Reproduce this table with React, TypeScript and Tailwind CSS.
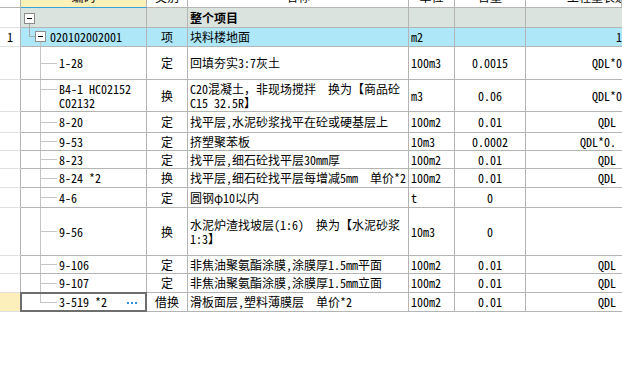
import React from "react";

type Child = {
  h: string;
  code: React.ReactNode;
  t: string;
  name: React.ReactNode;
  unit: string;
  q: string;
  e: string;
  br: string;
  last?: boolean;
};

const children: Child[] = [
  { h: "h-[33px]", code: "1-28", t: "定", name: "回填夯实3:7灰土", unit: "100m3", q: "0.0015", e: "QDL*0", br: "top-[16px]" },
  {
    h: "h-[32px]",
    code: (
      <>
        {"B4-1 HC02152"}
        <br />
        {"C02132"}
      </>
    ),
    t: "换",
    name: (
      <>
        {"C20混凝土，非现场搅拌  换为【商品砼"}
        <br />
        {"C15 32.5R】"}
      </>
    ),
    unit: "m3",
    q: "0.06",
    e: "QDL*0",
    br: "top-[9px]",
  },
  { h: "h-[21px]", code: "8-20", t: "定", name: "找平层,水泥砂浆找平在砼或硬基层上", unit: "100m2", q: "0.01", e: "QDL ", br: "top-[10px]" },
  { h: "h-[18px]", code: "9-53", t: "定", name: "挤塑聚苯板", unit: "10m3", q: "0.0002", e: "QDL*0. ", br: "top-[8px]" },
  { h: "h-[18px]", code: "8-23", t: "定", name: "找平层,细石砼找平层30mm厚", unit: "100m2", q: "0.01", e: "QDL ", br: "top-[8px]" },
  { h: "h-[19px]", code: "8-24 *2", t: "换", name: "找平层,细石砼找平层每增减5mm  单价*2", unit: "100m2", q: "0.01", e: "QDL ", br: "top-[9px]" },
  { h: "h-[20px]", code: "4-6", t: "定", name: "圆钢φ10以内", unit: "t", q: "0", e: "", br: "top-[9px]" },
  {
    h: "h-[48px]",
    code: "9-56",
    t: "换",
    name: (
      <>
        {"水泥炉渣找坡层(1:6)  换为【水泥砂浆"}
        <br />
        {"1:3】"}
      </>
    ),
    unit: "10m3",
    q: "0",
    e: "",
    br: "top-[23px]",
  },
  { h: "h-[18px]", code: "9-106", t: "定", name: "非焦油聚氨酯涂膜,涂膜厚1.5mm平面", unit: "100m2", q: "0.01", e: "QDL ", br: "top-[8px]" },
  { h: "h-[19px]", code: "9-107", t: "定", name: "非焦油聚氨酯涂膜,涂膜厚1.5mm立面", unit: "100m2", q: "0.01", e: "QDL ", br: "top-[9px]" },
  { h: "h-[19px]", code: "3-519 *2", t: "借换", name: "滑板面层,塑料薄膜层  单价*2", unit: "100m2", q: "0.01", e: "QDL ", br: "top-[9px]", last: true },
];

function Box({ className }: { className: string }) {
  return (
    <div
      className={`absolute w-[11px] h-[11px] border border-[#8c8c8c] bg-white flex items-center justify-center ${className}`}
    >
      <div className="w-[5px] h-px bg-black" />
    </div>
  );
}

function Head({ w, extra, children }: { w: string; extra: string; children?: React.ReactNode }) {
  return (
    <div className={`flex items-end overflow-hidden shrink-0 border-r border-b ${w} ${extra}`}>
      <span className="leading-[12px] mb-[4px] whitespace-nowrap">{children}</span>
    </div>
  );
}

export default function App() {
  return (
    <div className="w-[622px] h-[388px] bg-white overflow-hidden text-[12px] leading-[14px] text-black font-['Noto_Sans_Mono_CJK_SC','Noto_Sans_CJK_SC',monospace]">
      {/* header */}
      <div className="flex h-[8px]">
        <div className="w-[21px] shrink-0 border-r border-b border-[#b4b4b4] bg-white" />
        <Head w="w-[126px]" extra="justify-center bg-[#fdf0b9] border-r-[#b4b4b4] border-b-[#3aa0d5]">编码</Head>
        <Head w="w-[41px]" extra="justify-center bg-white border-[#b4b4b4]">类别</Head>
        <Head w="w-[221px]" extra="justify-center bg-white border-[#b4b4b4]">名称</Head>
        <Head w="w-[46px]" extra="justify-center bg-white border-[#b4b4b4]">单位</Head>
        <Head w="w-[71px]" extra="justify-center bg-white border-[#b4b4b4]">含量</Head>
        <Head w="w-[96px]" extra="justify-start pl-[41px] bg-white border-[#b4b4b4]">工程量表达式</Head>
      </div>

      {/* row: 整个项目 */}
      <div className="flex h-[20px]">
        <div className="w-[21px] shrink-0 border-r border-b border-r-[#b4b4b4] border-b-[#e0e0e0] bg-white" />
        <div className="relative w-[126px] shrink-0 border-r border-b border-[#b4b4b4] bg-[#dbe3df]">
          <Box className="left-[3px] top-[5px]" />
          <div className="absolute left-[8px] top-[16px] bottom-0 w-px bg-[#a8a8a8]" />
        </div>
        <div className="w-[41px] shrink-0 border-r border-b border-[#b4b4b4] bg-[#dbe3df]" />
        <div className="w-[221px] shrink-0 flex items-center pl-[2px] font-bold border-r border-b border-[#b4b4b4] bg-[#dbe3df]">
          整个项目
        </div>
        <div className="w-[46px] shrink-0 border-r border-b border-[#b4b4b4] bg-[#dbe3df]" />
        <div className="w-[71px] shrink-0 border-r border-b border-[#b4b4b4] bg-[#dbe3df]" />
        <div className="w-[96px] shrink-0 border-b border-[#b4b4b4] bg-[#dbe3df]" />
      </div>

      {/* row: 020102002001 */}
      <div className="flex h-[19px]">
        <div className="w-[21px] shrink-0 flex items-center justify-center border-r border-b border-r-[#b4b4b4] border-b-[#e0e0e0] bg-white">
          1
        </div>
        <div className="relative w-[126px] shrink-0 flex items-center pl-[29px] border-r border-b border-[#b4b4b4] bg-[#aee7f8]">
          <div className="absolute left-[8px] top-0 h-[9px] w-px bg-[#a8a8a8]" />
          <div className="absolute left-[8px] top-[8px] w-[6px] h-px bg-[#a8a8a8]" />
          <Box className="left-[14px] top-[3px]" />
          <div className="absolute left-[19px] top-[14px] bottom-0 w-px bg-[#c4c4c4]" />
          020102002001
        </div>
        <div className="w-[41px] shrink-0 flex items-center justify-center border-r border-b border-[#b4b4b4] bg-[#aee7f8]">
          项
        </div>
        <div className="w-[221px] shrink-0 flex items-center pl-[2px] border-r border-b border-[#b4b4b4] bg-[#aee7f8]">
          块料楼地面
        </div>
        <div className="w-[46px] shrink-0 flex items-center pl-[2px] border-r border-b border-[#b4b4b4] bg-[#aee7f8]">
          m2
        </div>
        <div className="w-[71px] shrink-0 border-r border-b border-[#b4b4b4] bg-[#aee7f8]" />
        <div className="w-[96px] shrink-0 flex items-center justify-end border-b border-[#b4b4b4] bg-[#aee7f8]">
          1
        </div>
      </div>

      {children.map((c, i) => (
        <div key={i} className={`flex ${c.h}`}>
          {c.last ? (
            <div className="w-[21px] shrink-0 border-r border-b border-r-[#2f9ad6] border-b-[#e0e0e0] bg-[#fdefbb]" />
          ) : (
            <div className="w-[21px] shrink-0 border-r border-b border-r-[#b4b4b4] border-b-[#e0e0e0] bg-white" />
          )}
          <div className="relative w-[126px] shrink-0 flex items-center pl-[38px] whitespace-pre border-r border-b border-[#b4b4b4] bg-white">
            {c.last ? (
              <div className="absolute left-[19px] top-0 h-[10px] w-px bg-[#c4c4c4]" />
            ) : (
              <div className="absolute left-[19px] top-0 bottom-0 w-px bg-[#c4c4c4]" />
            )}
            <div className={`absolute left-[19px] w-[17px] h-px bg-[#c4c4c4] ${c.br}`} />
            <div>{c.code}</div>
            {c.last && (
              <>
                <div className="absolute -left-px -top-px -right-px -bottom-px border-2 border-[#6e6e6e]" />
                <div className="absolute left-[106px] top-[9px] flex gap-[2px]">
                  <div className="w-[2px] h-[2px] bg-[#2f8fe0]" />
                  <div className="w-[2px] h-[2px] bg-[#2f8fe0]" />
                  <div className="w-[2px] h-[2px] bg-[#2f8fe0]" />
                </div>
              </>
            )}
          </div>
          <div className="w-[41px] shrink-0 flex items-center justify-center border-r border-b border-[#b4b4b4] bg-white">
            {c.t}
          </div>
          <div className="w-[221px] shrink-0 flex items-center pl-[2px] whitespace-pre border-r border-b border-[#b4b4b4] bg-white">
            <div>{c.name}</div>
          </div>
          <div className="w-[46px] shrink-0 flex items-center pl-[2px] border-r border-b border-[#b4b4b4] bg-white">
            {c.unit}
          </div>
          <div className="w-[71px] shrink-0 flex items-center justify-center border-r border-b border-[#b4b4b4] bg-white">
            {c.q}
          </div>
          <div className="w-[96px] shrink-0 flex items-center justify-end whitespace-pre overflow-hidden border-b border-[#b4b4b4] bg-white">
            {c.e}
          </div>
        </div>
      ))}
    </div>
  );
}
